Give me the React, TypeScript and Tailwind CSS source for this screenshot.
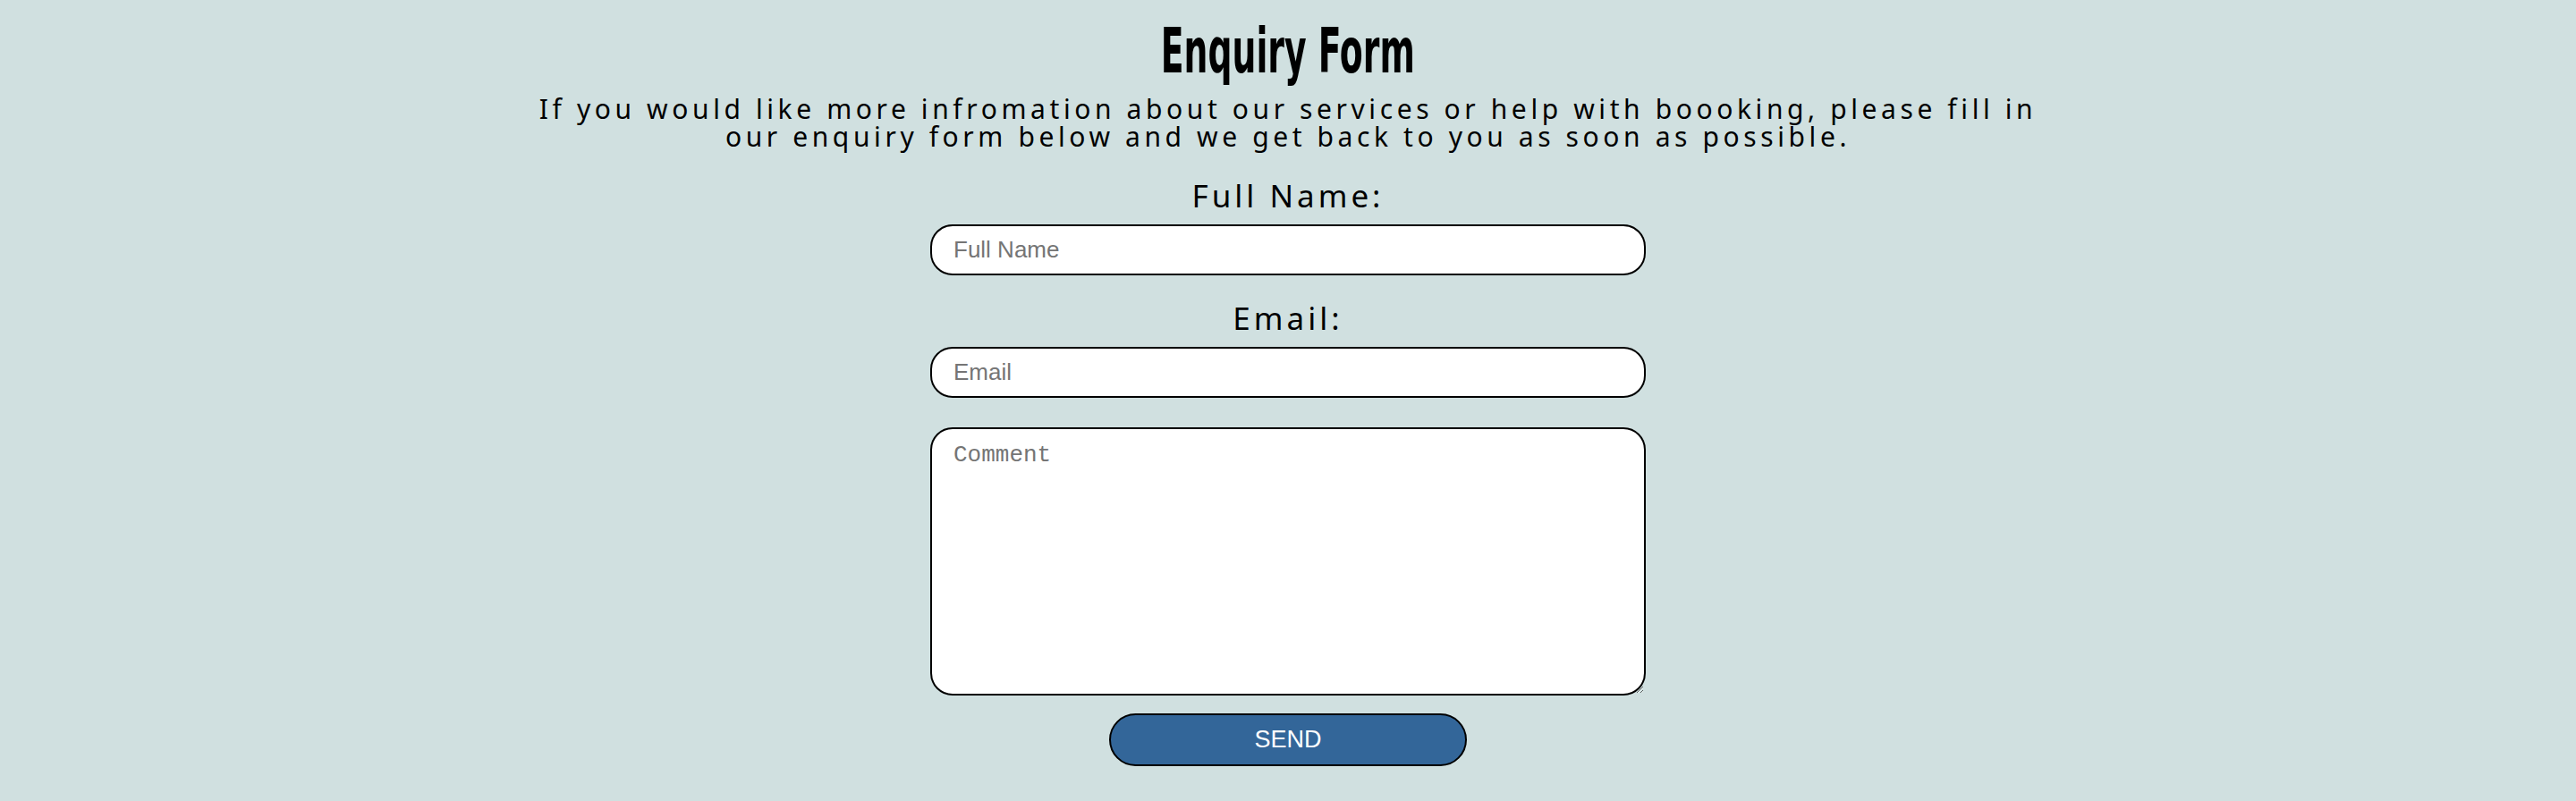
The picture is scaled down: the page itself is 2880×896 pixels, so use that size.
export default function App() {
  return (
    <div className="min-h-screen w-full bg-[#d0e0e0] flex flex-col items-center text-black">
      <h1 className="mt-[22px] h-[70px] text-[70px] leading-none font-bold font-['DejaVu_Sans_Condensed','DejaVu_Sans',sans-serif]">
        <span className="inline-block scale-x-[0.6]">Enquiry Form</span>
      </h1>
      <p className="mt-[14px] w-[1700px] text-center text-[30px] leading-[31px] tracking-[4.6px] font-['Noto_Sans',sans-serif]">
        If you would like more infromation about our services or help with boooking, please fill in our enquiry form below and we get back to you as soon as possible.
      </p>
      <form className="mt-[33px] flex flex-col items-center" onSubmit={(e) => e.preventDefault()}>
        <label
          htmlFor="name"
          className="h-[35px] text-[35px] leading-none tracking-[4px] font-['Noto_Sans',sans-serif]"
        >
          Full Name:
        </label>
        <input
          id="name"
          type="text"
          placeholder="Full Name"
          className="mt-[15px] w-[800px] h-[57px] rounded-[25px] border-2 border-black bg-white px-[24px] text-[26px] font-['Liberation_Sans',sans-serif] placeholder:text-[#757575] outline-none"
        />
        <label
          htmlFor="email"
          className="mt-[30px] h-[35px] text-[35px] leading-none tracking-[4px] font-['Noto_Sans',sans-serif]"
        >
          Email:
        </label>
        <input
          id="email"
          type="email"
          placeholder="Email"
          className="mt-[15px] w-[800px] h-[57px] rounded-[25px] border-2 border-black bg-white px-[24px] text-[26px] font-['Liberation_Sans',sans-serif] placeholder:text-[#757575] outline-none"
        />
        <textarea
          placeholder="Comment"
          className="mt-[33px] w-[800px] h-[300px] rounded-[25px] border-2 border-black bg-white px-[24px] pt-[10px] text-[26px] font-['Liberation_Mono',monospace] placeholder:text-[#757575] outline-none"
        />
        <button
          type="submit"
          className="mt-[20px] w-[400px] h-[59px] rounded-full border-2 border-black bg-[#336699] text-white text-[27px] font-['Liberation_Sans',sans-serif]"
        >
          SEND
        </button>
      </form>
    </div>
  );
}
